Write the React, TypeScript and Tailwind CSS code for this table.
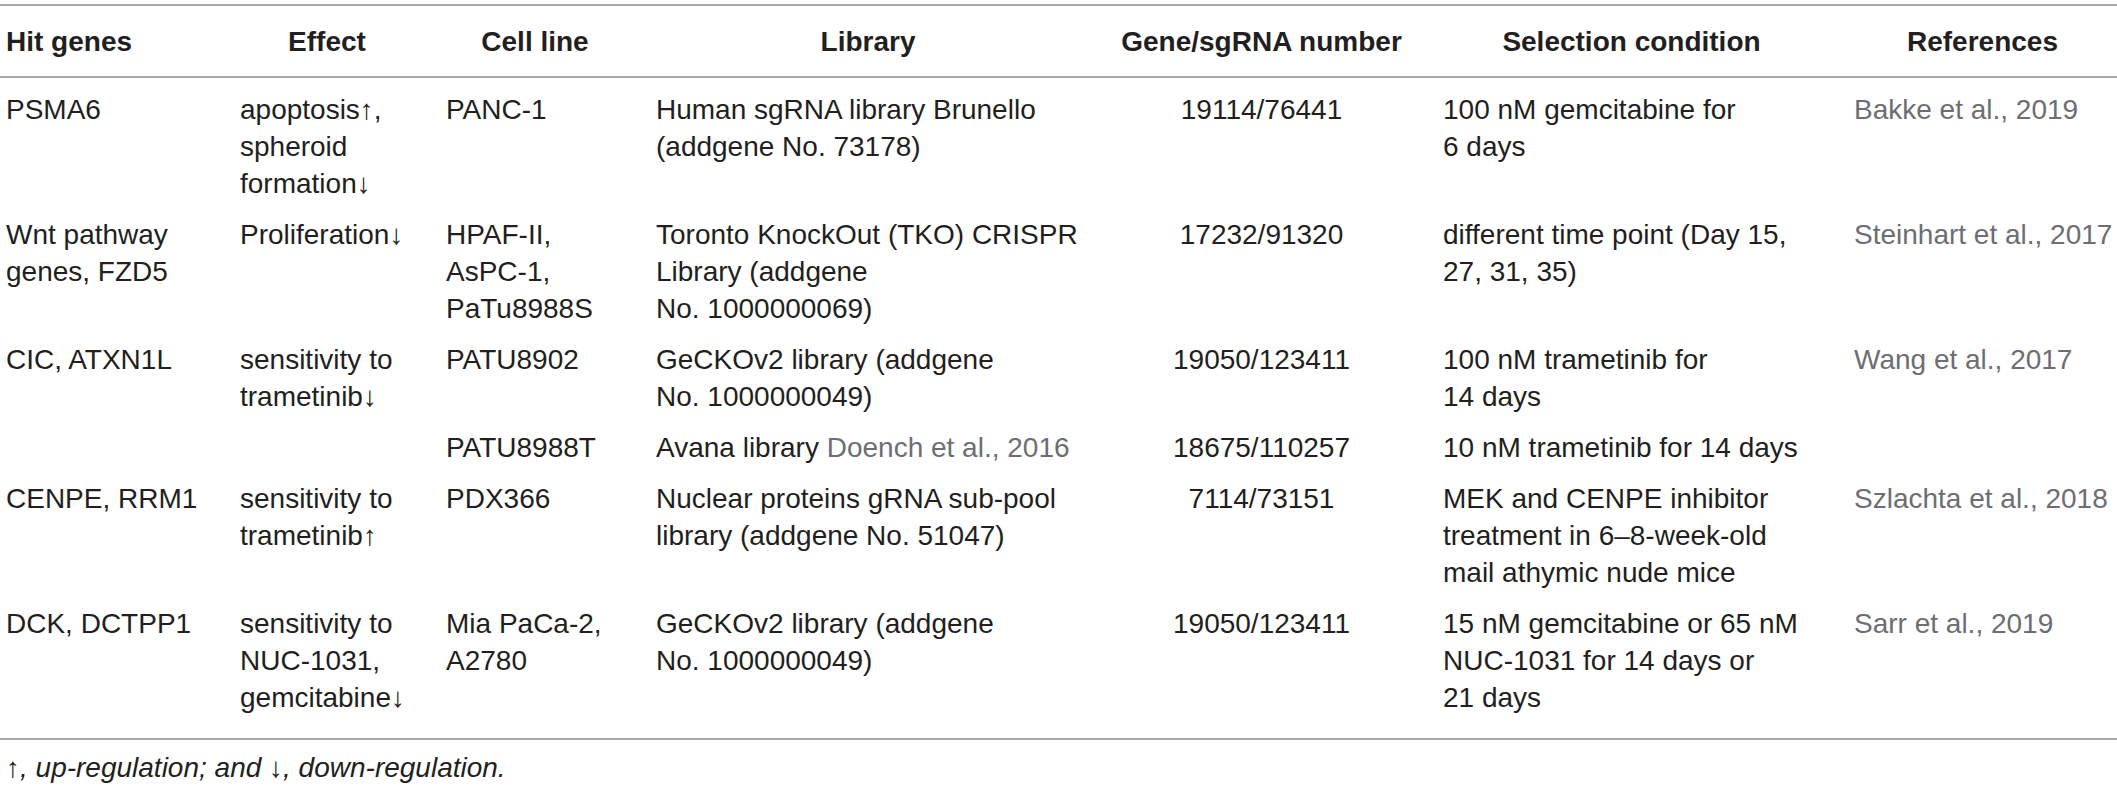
import React from "react";

type Row = {
  gene?: string[];
  effect?: string[];
  span?: number;
  cell: string[];
  library: React.ReactNode[];
  number: string;
  condition: string[];
  reference?: string;
};

const rows: Row[] = [
  {
    gene: ["PSMA6"],
    effect: ["apoptosis↑,", "spheroid", "formation↓"],
    cell: ["PANC-1"],
    library: ["Human sgRNA library Brunello", "(addgene No. 73178)"],
    number: "19114/76441",
    condition: ["100 nM gemcitabine for", "6 days"],
    reference: "Bakke et al., 2019",
  },
  {
    gene: ["Wnt pathway", "genes, FZD5"],
    effect: ["Proliferation↓"],
    cell: ["HPAF-II,", "AsPC-1,", "PaTu8988S"],
    library: ["Toronto KnockOut (TKO) CRISPR", "Library (addgene", "No. 1000000069)"],
    number: "17232/91320",
    condition: ["different time point (Day 15,", "27, 31, 35)"],
    reference: "Steinhart et al., 2017",
  },
  {
    gene: ["CIC, ATXN1L"],
    effect: ["sensitivity to", "trametinib↓"],
    span: 2,
    cell: ["PATU8902"],
    library: ["GeCKOv2 library (addgene", "No. 1000000049)"],
    number: "19050/123411",
    condition: ["100 nM trametinib for", "14 days"],
    reference: "Wang et al., 2017",
  },
  {
    cell: ["PATU8988T"],
    library: [
      <>
        Avana library <span className="text-[#6d6e71]">Doench et al., 2016</span>
      </>,
    ],
    number: "18675/110257",
    condition: ["10 nM trametinib for 14 days"],
  },
  {
    gene: ["CENPE, RRM1"],
    effect: ["sensitivity to", "trametinib↑"],
    cell: ["PDX366"],
    library: ["Nuclear proteins gRNA sub-pool", "library (addgene No. 51047)"],
    number: "7114/73151",
    condition: ["MEK and CENPE inhibitor", "treatment in 6–8-week-old", "mail athymic nude mice"],
    reference: "Szlachta et al., 2018",
  },
  {
    gene: ["DCK, DCTPP1"],
    effect: ["sensitivity to", "NUC-1031,", "gemcitabine↓"],
    cell: ["Mia PaCa-2,", "A2780"],
    library: ["GeCKOv2 library (addgene", "No. 1000000049)"],
    number: "19050/123411",
    condition: ["15 nM gemcitabine or 65 nM", "NUC-1031 for 14 days or", "21 days"],
    reference: "Sarr et al., 2019",
  },
];

function Lines({ items }: { items: React.ReactNode[] }) {
  return (
    <>
      {items.map((t, i) => (
        <div key={i} className="whitespace-nowrap">
          {t}
        </div>
      ))}
    </>
  );
}

const td = "align-top px-[6px] pt-[13px]";

export default function App() {
  return (
    <div
      className="w-[2117px] bg-white pt-[4px] text-[28px] leading-[37px] text-[#231f20]"
      style={{ fontFamily: '"Liberation Sans", Arial, sans-serif' }}
    >
      <table className="w-[2117px] table-fixed border-collapse border-y-2 border-[#a7a9ac]">
        <colgroup>
          <col className="w-[234px]" />
          <col className="w-[206px]" />
          <col className="w-[210px]" />
          <col className="w-[436px]" />
          <col className="w-[351px]" />
          <col className="w-[411px]" />
          <col className="w-[269px]" />
        </colgroup>
        <thead>
          <tr className="border-b-2 border-[#a7a9ac] font-bold">
            <th className="px-[6px] pt-[17px] pb-[16px] text-left">Hit genes</th>
            <th className="pl-[6px] pr-[26px] pt-[17px] pb-[16px] text-center">Effect</th>
            <th className="pl-[6px] pr-[26px] pt-[17px] pb-[16px] text-center">Cell line</th>
            <th className="px-[6px] pt-[17px] pb-[16px] text-center">Library</th>
            <th className="px-[6px] pt-[17px] pb-[16px] text-center whitespace-nowrap">Gene/sgRNA number</th>
            <th className="pl-[6px] pr-[28px] pt-[17px] pb-[16px] text-center">Selection condition</th>
            <th className="px-[6px] pt-[17px] pb-[16px] text-center">References</th>
          </tr>
        </thead>
        <tbody>
          {rows.map((r, i) => {
            const cls = td + (i === rows.length - 1 ? " pb-[22px]" : " pb-[1px]");
            return (
              <tr key={i}>
                {r.gene && (
                  <td rowSpan={r.span} className={cls}>
                    <Lines items={r.gene} />
                  </td>
                )}
                {r.effect && (
                  <td rowSpan={r.span} className={cls}>
                    <Lines items={r.effect} />
                  </td>
                )}
                <td className={cls}>
                  <Lines items={r.cell} />
                </td>
                <td className={cls}>
                  <Lines items={r.library} />
                </td>
                <td className={cls + " text-center"}>{r.number}</td>
                <td className={cls}>
                  <Lines items={r.condition} />
                </td>
                {(r.gene || r.reference) && (
                  <td rowSpan={r.span} className={cls + " whitespace-nowrap text-[#6d6e71]"}>
                    {r.reference}
                  </td>
                )}
              </tr>
            );
          })}
        </tbody>
      </table>
      <p className="mt-[9px] px-[6px] italic">↑, up-regulation; and ↓, down-regulation.</p>
    </div>
  );
}
